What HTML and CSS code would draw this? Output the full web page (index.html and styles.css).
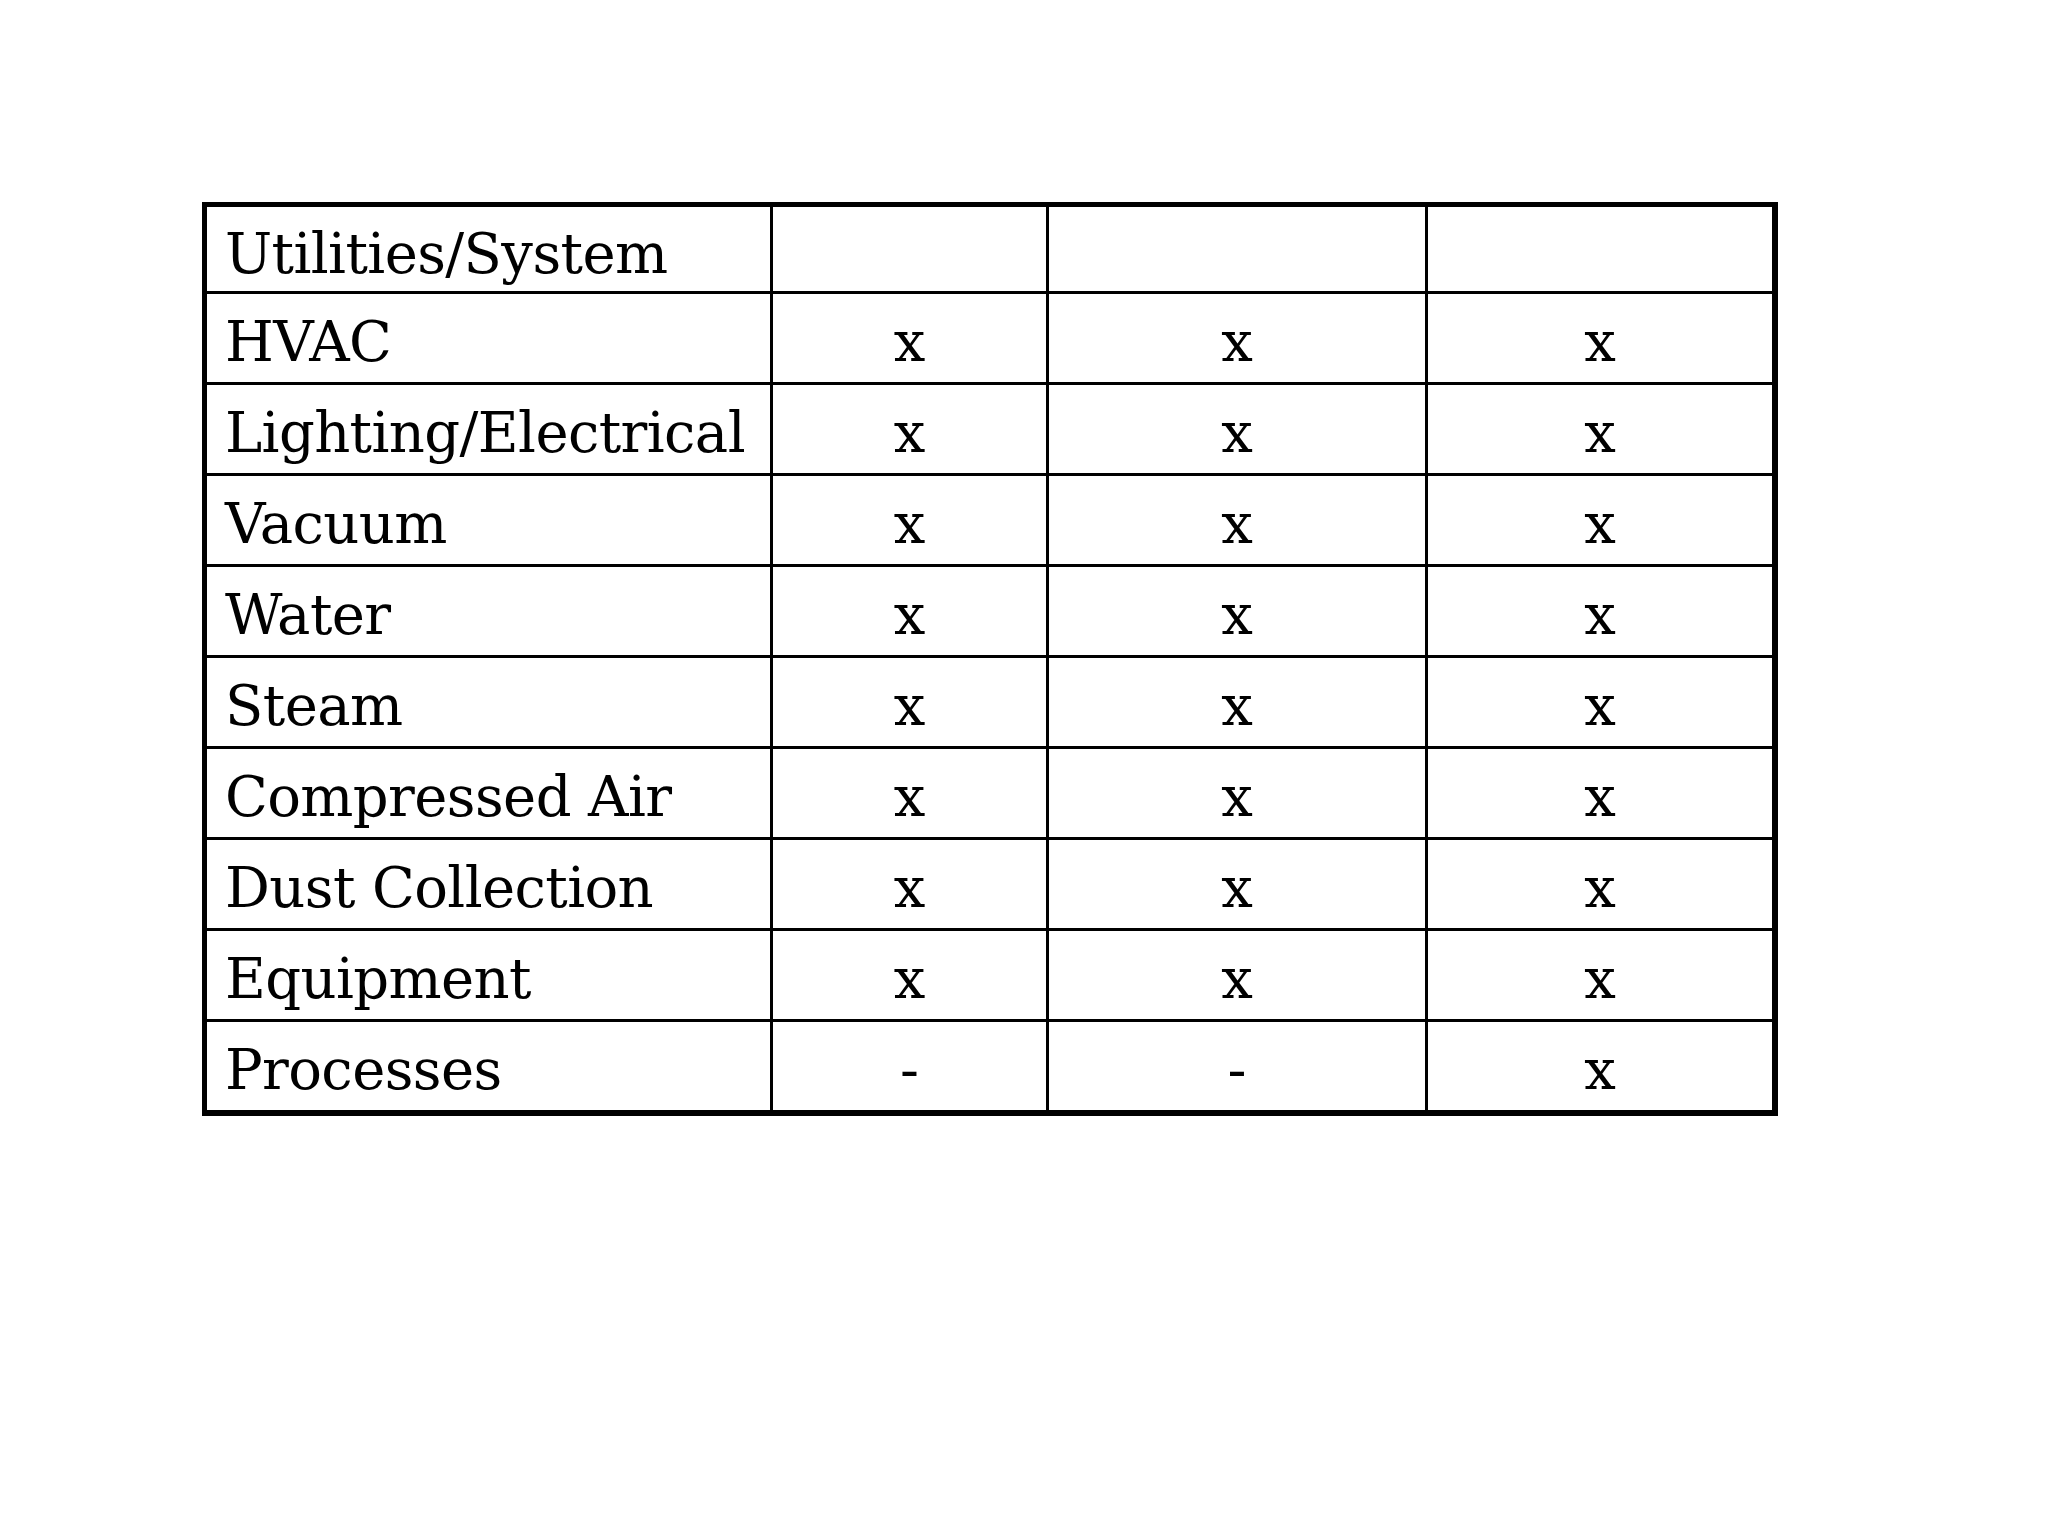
FILE: index.html
```html
<!DOCTYPE html>
<html lang="en">
<head>
<meta charset="utf-8">
<title>Utilities / System</title>
<link rel="stylesheet" href="styles.css">
</head>
<body>
<div class="matrix" role="table">
  <div class="cell label head">Utilities/System</div>
  <div class="cell mark head"></div>
  <div class="cell mark head"></div>
  <div class="cell mark head last-col"></div>

  <div class="cell label">HVAC</div>
  <div class="cell mark">x</div>
  <div class="cell mark">x</div>
  <div class="cell mark last-col">x</div>

  <div class="cell label">Lighting/Electrical</div>
  <div class="cell mark">x</div>
  <div class="cell mark">x</div>
  <div class="cell mark last-col">x</div>

  <div class="cell label">Vacuum</div>
  <div class="cell mark">x</div>
  <div class="cell mark">x</div>
  <div class="cell mark last-col">x</div>

  <div class="cell label">Water</div>
  <div class="cell mark">x</div>
  <div class="cell mark">x</div>
  <div class="cell mark last-col">x</div>

  <div class="cell label">Steam</div>
  <div class="cell mark">x</div>
  <div class="cell mark">x</div>
  <div class="cell mark last-col">x</div>

  <div class="cell label">Compressed Air</div>
  <div class="cell mark">x</div>
  <div class="cell mark">x</div>
  <div class="cell mark last-col">x</div>

  <div class="cell label">Dust Collection</div>
  <div class="cell mark">x</div>
  <div class="cell mark">x</div>
  <div class="cell mark last-col">x</div>

  <div class="cell label">Equipment</div>
  <div class="cell mark">x</div>
  <div class="cell mark">x</div>
  <div class="cell mark last-col">x</div>

  <div class="cell label last-row">Processes</div>
  <div class="cell mark last-row">-</div>
  <div class="cell mark last-row">-</div>
  <div class="cell mark last-col last-row">x</div>
</div>
</body>
</html>
```

FILE: styles.css
```css
html, body {
  margin: 0;
  padding: 0;
  background: #ffffff;
}

body {
  font-family: "DejaVu Serif", "Liberation Serif", serif;
  color: #000000;
}

.matrix {
  display: grid;
  grid-template-columns: 566px 276px 379px 344px;
  grid-template-rows: 87px repeat(8, 91px) 88px;
  width: max-content;
  margin: 202px 0 0 202px;
  border-top: 5px solid #000000;
  border-left: 5px solid #000000;
  border-right: 6px solid #000000;
  border-bottom: 6px solid #000000;
}

.cell {
  box-sizing: border-box;
  border-right: 3px solid #000000;
  border-bottom: 3px solid #000000;
  font-size: 56px;
  line-height: 64px;
  padding-top: 16px;
  white-space: nowrap;
}

.cell.head {
  padding-top: 15px;
}

.label {
  padding-left: 18px;
  text-align: left;
  letter-spacing: -0.6px;
}

.mark {
  text-align: center;
}

.last-col {
  border-right: none;
}

.last-row {
  border-bottom: none;
}
```
